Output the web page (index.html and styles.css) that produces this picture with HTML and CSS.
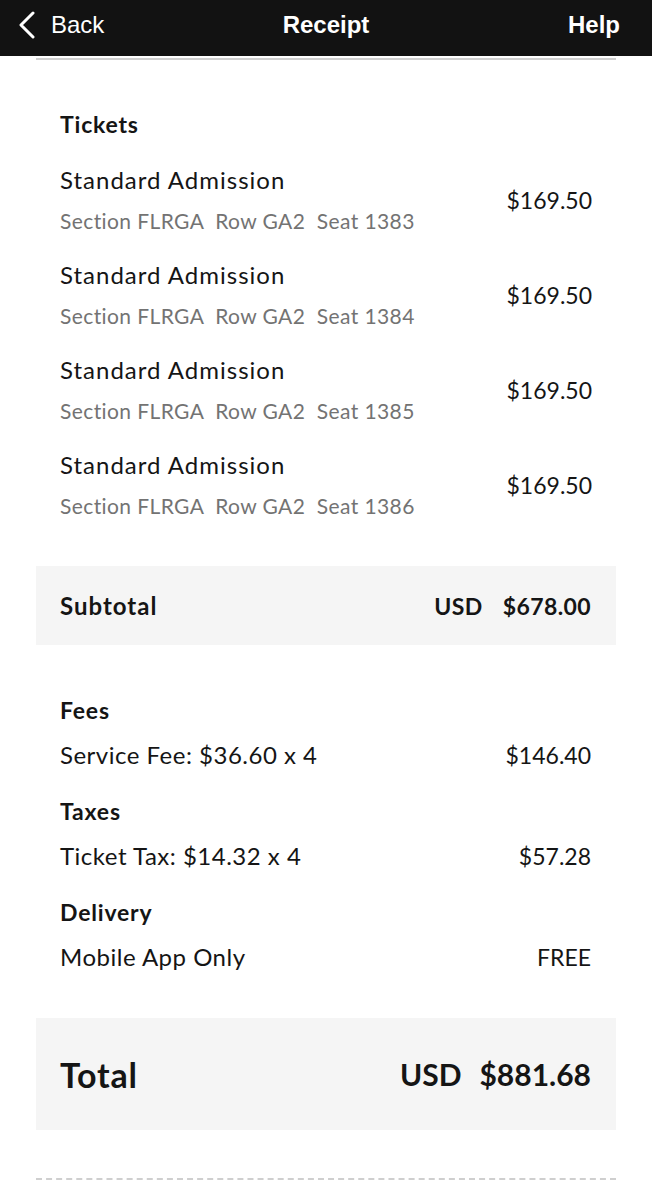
FILE: index.html
```html
<!DOCTYPE html>
<html lang="en">
<head>
  <meta charset="UTF-8" />
  <meta name="viewport" content="width=device-width, initial-scale=1.0"/>
  <title>Receipt</title>
  <link rel="stylesheet" href="styles.css">
</head>
<body>
  <header class="topbar">
    <a class="back" href="#">
      <svg width="20" height="28" viewBox="0 0 20 28"><path d="M15 2 L3 14 L15 26" fill="none" stroke="#fff" stroke-width="3" stroke-linecap="round" stroke-linejoin="round"/></svg>
      <span>Back</span>
    </a>
    <div class="title">Receipt</div>
    <a class="help" href="#">Help</a>
  </header>

  <main class="receipt">
    <div class="top-rule"></div>

    <section class="tickets">
      <h2>Tickets</h2>
      <div class="ticket">
        <div class="info">
          <div class="name">Standard Admission</div>
          <div class="seat">Section FLRGA&nbsp; Row GA2&nbsp; Seat 1383</div>
        </div>
        <div class="price">$169.50</div>
      </div>
      <div class="ticket">
        <div class="info">
          <div class="name">Standard Admission</div>
          <div class="seat">Section FLRGA&nbsp; Row GA2&nbsp; Seat 1384</div>
        </div>
        <div class="price">$169.50</div>
      </div>
      <div class="ticket">
        <div class="info">
          <div class="name">Standard Admission</div>
          <div class="seat">Section FLRGA&nbsp; Row GA2&nbsp; Seat 1385</div>
        </div>
        <div class="price">$169.50</div>
      </div>
      <div class="ticket">
        <div class="info">
          <div class="name">Standard Admission</div>
          <div class="seat">Section FLRGA&nbsp; Row GA2&nbsp; Seat 1386</div>
        </div>
        <div class="price">$169.50</div>
      </div>
    </section>

    <div class="subtotal">
      <span class="label">Subtotal</span>
      <span class="amount"><span>USD</span><span>$678.00</span></span>
    </div>

    <section class="charges">
      <div class="group">
        <h3>Fees</h3>
        <div class="line"><span class="desc">Service Fee: $36.60 x 4</span><span>$146.40</span></div>
      </div>
      <div class="group">
        <h3>Taxes</h3>
        <div class="line"><span class="desc">Ticket Tax: $14.32 x 4</span><span>$57.28</span></div>
      </div>
      <div class="group">
        <h3>Delivery</h3>
        <div class="line"><span class="desc">Mobile App Only</span><span>FREE</span></div>
      </div>
    </section>

    <div class="total">
      <span class="label">Total</span>
      <span class="amount"><span>USD</span><span>$881.68</span></span>
    </div>

    <div class="dash-rule"></div>
  </main>
</body>
</html>
```

FILE: styles.css
```css
* {
  box-sizing: border-box;
}

body {
  margin: 0;
  background: #fff;
  color: #151515;
  font-family: Lato, 'Noto Sans', sans-serif;
}

/* Top navigation bar */
.topbar {
  height: 56px;
  background: #121212;
  color: #fff;
  display: grid;
  grid-template-columns: 1fr auto 1fr;
  align-items: center;
  padding: 0 32px 6px 18px;
  font-family: 'Liberation Sans', Arial, sans-serif;
  font-size: 24px;
}

.topbar a {
  color: #fff;
  text-decoration: none;
}

.back {
  display: flex;
  align-items: center;
  gap: 13px;
}

.title {
  font-weight: bold;
  padding-left: 14px;
}

.help {
  font-weight: bold;
  text-align: right;
}

/* Receipt body */
.receipt {
  margin: 0 36px;
}

.top-rule {
  margin-top: 2px;
  height: 2px;
  background: #cfcfcf;
}

.tickets {
  padding: 49px 24px 0 24px;
}

h2, h3 {
  margin: 0;
  font-size: 23px;
  font-weight: bold;
  letter-spacing: 0.8px;
  line-height: 30px;
}

.tickets h2 {
  margin-bottom: 20px;
}

.ticket {
  display: flex;
  align-items: center;
  justify-content: space-between;
  margin-bottom: 13px;
}

.name {
  font-size: 24px;
  letter-spacing: 1px;
  line-height: 41px;
}

.seat {
  font-size: 21px;
  letter-spacing: 0.4px;
  line-height: 41px;
  color: #737373;
}

.price {
  font-size: 23px;
}

.subtotal,
.total {
  background: #f5f5f5;
  display: flex;
  align-items: center;
  justify-content: space-between;
  padding: 0 25px 0 24px;
  font-weight: bold;
}

.subtotal {
  margin-top: 40px;
  height: 79px;
  font-size: 23px;
}

.subtotal .label {
  font-size: 24px;
  letter-spacing: 1px;
}

.amount {
  display: flex;
  gap: 20px;
  letter-spacing: 0.4px;
}

.charges {
  padding: 50px 25px 0 24px;
  display: flex;
  flex-direction: column;
  gap: 26px;
}

.line {
  display: flex;
  justify-content: space-between;
  margin-top: 15px;
  font-size: 23px;
  line-height: 30px;
}

.line .desc {
  font-size: 24px;
  letter-spacing: 0.5px;
}

.total {
  margin-top: 46px;
  height: 112px;
  font-size: 30px;
}

.total .label {
  font-size: 34px;
  letter-spacing: 0.8px;
}

.total .amount {
  gap: 18px;
  letter-spacing: 0;
}

.dash-rule {
  margin-top: 48px;
  border-top: 2px dashed #cfcfcf;
}
```
